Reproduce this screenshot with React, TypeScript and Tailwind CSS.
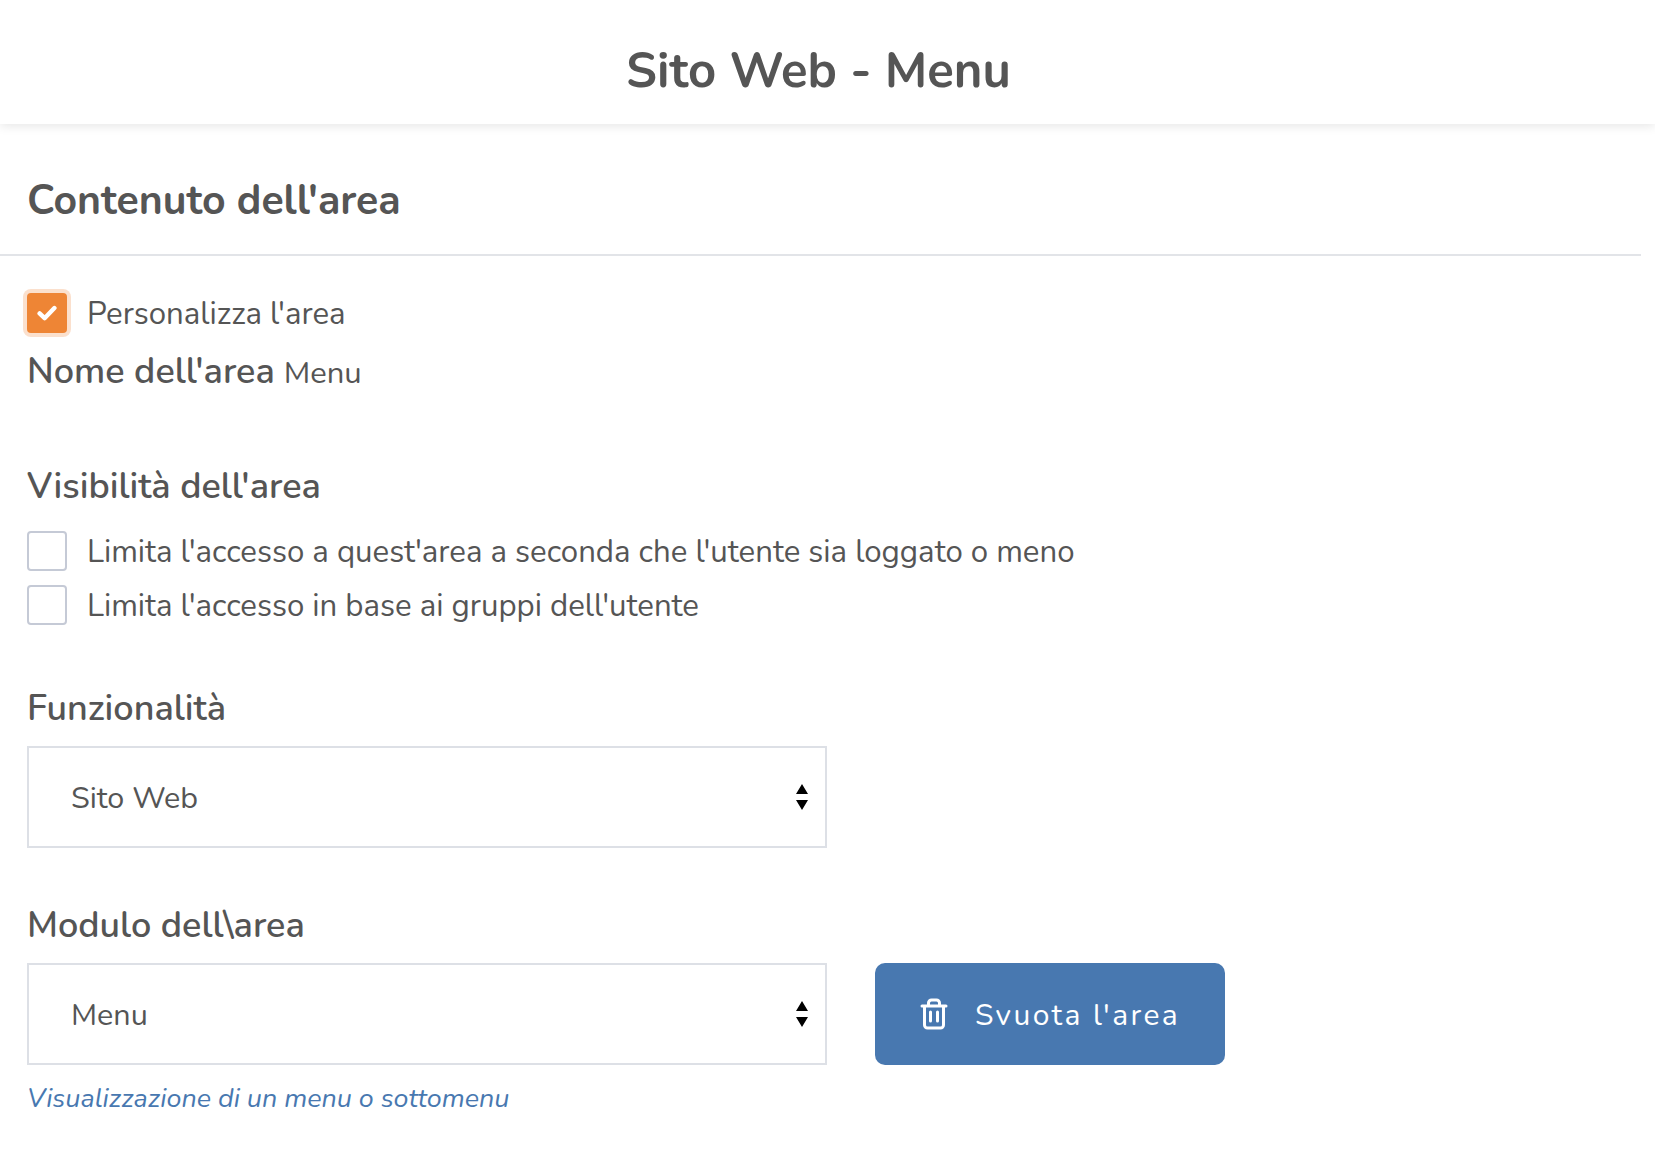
const font = { fontFamily: '"Nunito", "Open Sans", "Noto Sans", sans-serif' };

const Check = ({ checked, label }: { checked?: boolean; label: string }) => (
  <div className="flex items-center h-[54px]">
    {checked ? (
      <div className="w-10 h-10 rounded-[4px] bg-[#ee8535] ring-[4px] ring-[#fbe0cd] flex items-center justify-center">
        <svg className="w-[20px] h-[16px]" viewBox="0 0 20 16" fill="none" stroke="white" strokeWidth={4.4} strokeLinejoin="round" strokeLinecap="round">
          <path d="M2.6 8.4l5 4.8L17.4 3" />
        </svg>
      </div>
    ) : (
      <div className="w-10 h-10 rounded-[4px] bg-white border-2 border-[#c5cad6]" />
    )}
    <span className="ml-[20px] pt-[2px] text-[31.2px] text-[#555]">{label}</span>
  </div>
);

const Select = ({ value }: { value: string }) => (
  <div className="w-[800px] h-[102px] border-2 border-[#dde0e6] flex items-center justify-between pl-[42px] pr-[17px] text-[#555] text-[30.5px]">
    <span className="pt-[3px]">{value}</span>
    <svg className="w-[12px] h-[26px]" viewBox="0 0 12 26" fill="#000">
      <path d="M6 0l6 10H0zM6 26L0 16h12z" />
    </svg>
  </div>
);

export default function App() {
  return (
    <div className="w-[1655px] h-[1155px] bg-white overflow-hidden" style={font}>
      <header className="h-[124px] pt-[17px] pr-[18px] flex items-center justify-center shadow-[0_2px_10px_rgba(0,0,0,0.1)]">
        <h1 className="text-[49px] font-bold text-[#555]">Sito Web - Menu</h1>
      </header>
      <div className="w-[1641px] h-[132px] pt-[23px] border-b-2 border-[#e2e4e8] pl-[27px] flex items-center">
        <h2 className="text-[41px] font-bold text-[#555]">Contenuto dell'area</h2>
      </div>
      <div className="pl-[27px]">
        <div className="mt-[30px]">
          <Check checked label="Personalizza l'area" />
        </div>
        <div className="mt-[5px] text-[#555]">
          <span className="text-[36px] font-semibold">Nome dell'area</span>
          <span className="ml-[9px] text-[31px]">Menu</span>
        </div>
        <h3 className="mt-[61px] text-[36px] font-semibold text-[#555]">Visibilità dell'area</h3>
        <div className="mt-[10px]">
          <Check label="Limita l'accesso a quest'area a seconda che l'utente sia loggato o meno" />
          <Check label="Limita l'accesso in base ai gruppi dell'utente" />
        </div>
        <h3 className="mt-[50px] text-[36px] font-semibold text-[#555]">Funzionalità</h3>
        <div className="mt-[10px]"><Select value="Sito Web" /></div>
        <h3 className="mt-[51px] text-[36px] font-semibold text-[#555]">Modulo dell\area</h3>
        <div className="mt-[10px] flex items-center gap-[48px]">
          <Select value="Menu" />
          <button className="w-[350px] h-[102px] rounded-[10px] bg-[#4878b0] text-white text-[30px] tracking-[2.4px] flex items-center justify-center gap-[27px]">
            <svg className="w-[28px] h-[32px]" viewBox="0 0 27 32" fill="none" stroke="white" strokeWidth={3} strokeLinecap="round">
              <path d="M1.5 8h24M8 8V5a3 3 0 0 1 3-3h5a3 3 0 0 1 3 3v3M4 8v19a3 3 0 0 0 3 3h13a3 3 0 0 0 3-3V8M10 14v9M17 14v9" />
            </svg>
            <span className="pt-[2px]">Svuota l'area</span>
          </button>
        </div>
        <p className="mt-[13px] text-[26.9px] italic text-[#4878b0]">Visualizzazione di un menu o sottomenu</p>
      </div>
    </div>
  );
}
